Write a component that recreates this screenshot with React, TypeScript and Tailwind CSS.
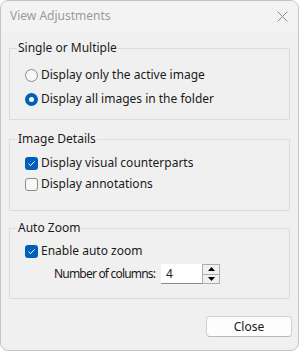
import { useState } from "react";

const font = { fontFamily: '"Segoe UI", "Noto Sans", "Open Sans", sans-serif' };

type GroupProps = {
    title: string;
    className?: string;
    children: React.ReactNode;
};

const Group = ({ title, className, children }: GroupProps) => (
    <fieldset
        className={`border border-[#dcdcdc] mx-[8px] pl-[16px] ${className ?? ""}`}
    >
        <legend className="ml-[-9px] px-[1px] text-[12px] leading-[16px] text-[#1a1a1a]">
            {title}
        </legend>
        {children}
    </fieldset>
);

const Radio = ({ checked, label, onClick }: { checked: boolean; label: string; onClick: () => void }) => (
    <div className="flex items-center h-[16px] cursor-default" onClick={onClick}>
        {checked ? (
            <span className="w-[13px] h-[13px] rounded-full bg-[#005fb8] flex items-center justify-center">
                <span className="w-[5px] h-[5px] rounded-full bg-white" />
            </span>
        ) : (
            <span className="w-[13px] h-[13px] rounded-full border border-[#8a8a8a] bg-[#f7f7f7]" />
        )}
        <span className="ml-[3px] text-[12px] leading-[16px] text-[#1a1a1a]">{label}</span>
    </div>
);

const Checkbox = ({ checked, label, onClick }: { checked: boolean; label: string; onClick: () => void }) => (
    <div className="flex items-center h-[16px] cursor-default" onClick={onClick}>
        {checked ? (
            <span className="w-[13px] h-[13px] rounded-[3px] bg-[#005fb8] flex items-center justify-center">
                <svg width="9" height="9" viewBox="0 0 9 9" fill="none">
                    <path d="M1.5 4.8 L3.5 6.6 L7.6 2.4" stroke="white" strokeWidth="1" />
                </svg>
            </span>
        ) : (
            <span className="w-[13px] h-[13px] rounded-[3px] border border-[#8a8a8a] bg-[#f7f7f7]" />
        )}
        <span className="ml-[3px] text-[12px] leading-[16px] text-[#1a1a1a]">{label}</span>
    </div>
);

const App = () => {
    const [mode, setMode] = useState("all");
    const [visual, setVisual] = useState(true);
    const [notes, setNotes] = useState(false);
    const [zoom, setZoom] = useState(true);
    const [cols, setCols] = useState(4);

    return (
        <div style={font} className="w-[299px] h-[351px] bg-[#f0f0f0] border border-[#c4c4c4] rounded-[8px] overflow-hidden flex flex-col">
            <div className="h-[30px] bg-[#f3f3f3] flex items-center justify-between pl-[9px] pr-[10px] shrink-0">
                <span className="text-[12px] text-[#9a9a9a]">View Adjustments</span>
                <svg width="11" height="11" viewBox="0 0 11 11">
                    <path d="M0.5 0.5 L10.5 10.5 M10.5 0.5 L0.5 10.5" stroke="#8c8c8c" strokeWidth="1" />
                </svg>
            </div>

            <Group title="Single or Multiple" className="mt-[9px] pt-[11px] pb-[12px]">
                <div className="flex flex-col gap-[8px] ml-[-1px]">
                    <Radio checked={mode === "one"} label="Display only the active image" onClick={() => setMode("one")} />
                    <Radio checked={mode === "all"} label="Display all images in the folder" onClick={() => setMode("all")} />
                </div>
            </Group>

            <Group title="Image Details" className="mt-[11px] pt-[8px] pb-[18px]">
                <div className="flex flex-col gap-[5px] ml-[-1px]">
                    <Checkbox checked={visual} label="Display visual counterparts" onClick={() => setVisual(!visual)} />
                    <Checkbox checked={notes} label="Display annotations" onClick={() => setNotes(!notes)} />
                </div>
            </Group>

            <Group title="Auto Zoom" className="mt-[9px] pt-[7px] pb-[14px]">
                <div className="flex flex-col ml-[-1px]">
                    <Checkbox checked={zoom} label="Enable auto zoom" onClick={() => setZoom(!zoom)} />
                    <div className="flex items-center mt-[5px] pl-[29px]">
                        <span className="w-[107px] shrink-0 whitespace-nowrap tracking-[-0.8px] text-[12px] leading-[16px] text-[#1a1a1a]">
                            Number of columns:
                        </span>
                        <div className="flex h-[20px]">
                            <div className="w-[41px] h-[20px] bg-white border-b border-[#8a8a8a] pl-[5px] text-[12px] leading-[19px] text-[#1a1a1a]">
                                {cols}
                            </div>
                            <div className="w-[18px] h-[20px] border border-[#adadad] bg-[#f0f0f0] flex flex-col">
                                <button
                                    className="flex-1 flex items-center justify-center border-b border-[#adadad]"
                                    onClick={() => setCols(cols + 1)}
                                >
                                    <svg width="7" height="4" viewBox="0 0 7 4">
                                        <path d="M0 4 L3.5 0 L7 4 Z" fill="#000" />
                                    </svg>
                                </button>
                                <button
                                    className="flex-1 flex items-center justify-center"
                                    onClick={() => setCols(Math.max(1, cols - 1))}
                                >
                                    <svg width="7" height="4" viewBox="0 0 7 4">
                                        <path d="M0 0 L3.5 4 L7 0 Z" fill="#000" />
                                    </svg>
                                </button>
                            </div>
                        </div>
                    </div>
                </div>
            </Group>

            <div className="flex justify-end mt-[17px] pr-[6px]">
                <button className="w-[86px] h-[21px] bg-[#fdfdfd] border border-[#d0d0d0] border-b-[#b8b8b8] rounded-[4px] text-[12px] text-[#1a1a1a]">
                    Close
                </button>
            </div>
        </div>
    );
};

export default App;
